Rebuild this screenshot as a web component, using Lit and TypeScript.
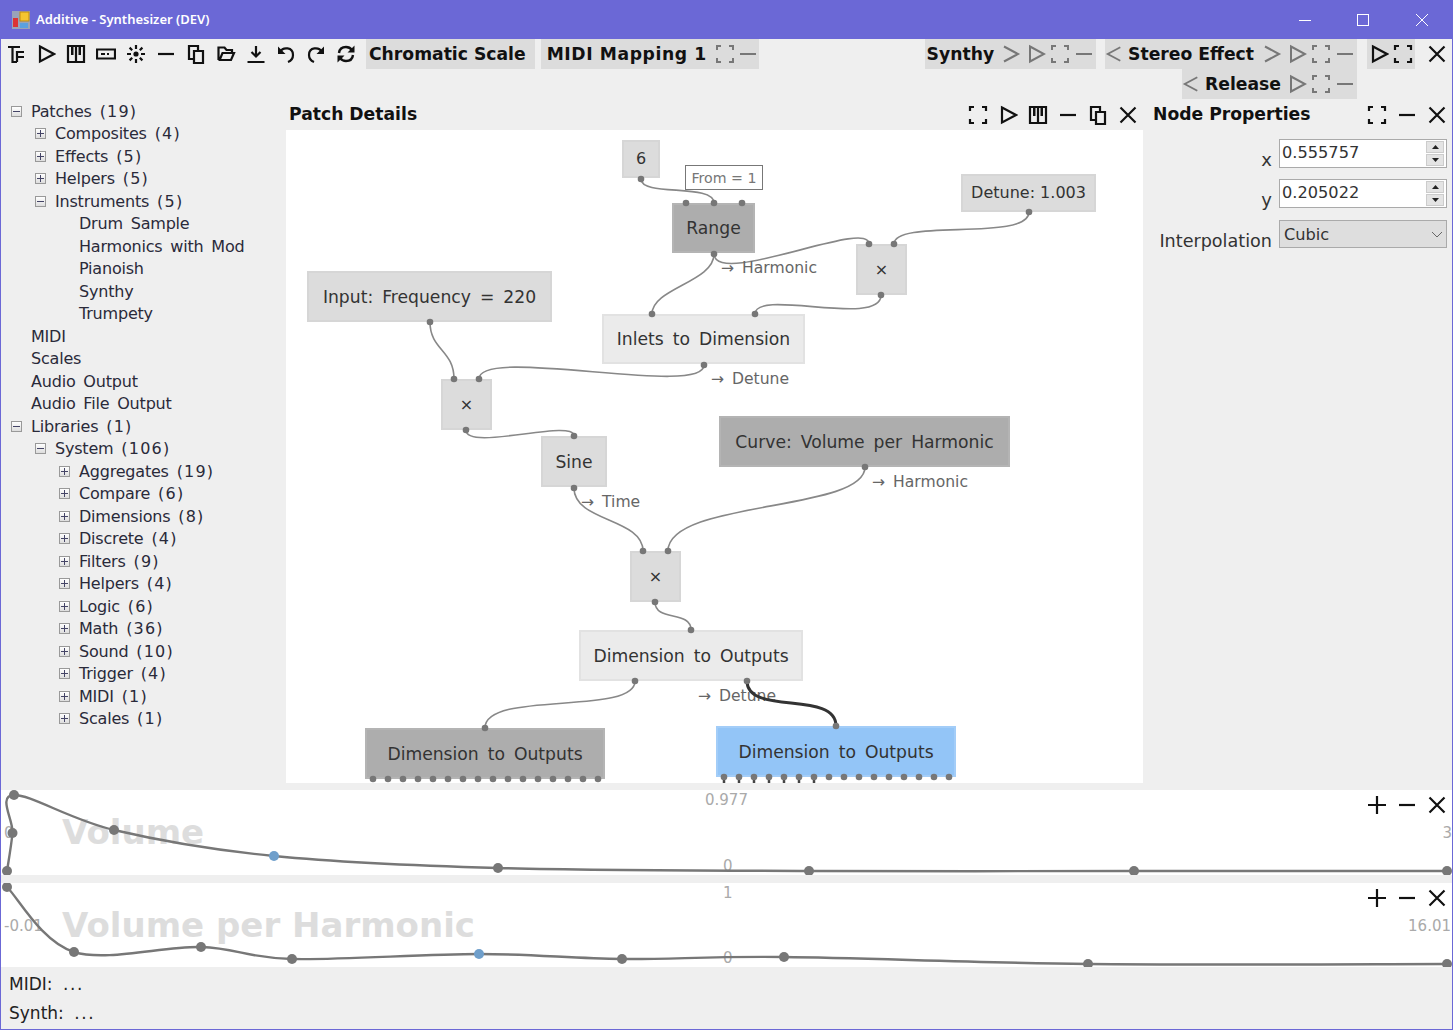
import { LitElement, html, css, svg } from "lit";
import { customElement } from "lit/decorators.js";

const ic: Record<string, any> = {
  tree: svg`<path d="M2 3H14M6.5 3V18H11M11 18V8H18M11 13H18" fill="none"/>`,
  play: svg`<path d="M4 2.5L18 10L4 17.5Z" fill="none"/>`,
  piano: svg`<path d="M2 2H18V18H2ZM10 2V18" fill="none"/><path d="M5 2H7.5V11H5ZM12.5 2H15V11H12.5Z" fill="currentColor" stroke="none"/>`,
  box: svg`<path d="M1 5.5H19V14.5H1Z" fill="none"/><path d="M5 9H9V11H5ZM11 9H13V11H11Z" fill="currentColor" stroke="none"/>`,
  spark: svg`<path d="M10 1V5M10 15V19M1 10H5M15 10H19M3.6 3.6L6.2 6.2M13.8 13.8L16.4 16.4M16.4 3.6L13.8 6.2M6.2 13.8L3.6 16.4" stroke-width="2.2" fill="none"/><circle cx="10" cy="10" r="2.6" fill="currentColor" stroke="none"/>`,
  minus: svg`<path d="M2 10H18" fill="none"/>`,
  copy: svg`<path d="M3 2H12V15H3Z" fill="none"/><path d="M8 7H17V19H8Z" fill="#efefef"/>`,
  open: svg`<path d="M2.5 16V3.5H8.5L10.5 6H16V9M2.5 16H15L18 9H6.5L4 15" fill="none"/>`,
  save: svg`<path d="M10 2V12M5.5 8L10 12.5L14.5 8M1.5 18H18.5" fill="none"/>`,
  undo: svg`<path d="M4 8C7 2.5 17 3 17 11C17 15 14.5 17 12 18" fill="none"/><path d="M2 2.5V10H9.5Z" fill="currentColor" stroke="none"/>`,
  redo: svg`<path d="M16 8C13 2.5 3 3 3 11C3 15 5.5 17 8 18" fill="none"/><path d="M18 2.5V10H10.5Z" fill="currentColor" stroke="none"/>`,
  sync: svg`<path d="M3 9C3.5 5 6.5 3 10 3C12.5 3 14.5 4 16 6M17 11C16.5 15 13.5 17 10 17C7.5 17 5.5 16 4 14" stroke-width="2.4" fill="none"/><path d="M18.5 1.5V8.5H11.5ZM1.5 18.5V11.5H8.5Z" fill="currentColor" stroke="none"/>`,
  expand: svg`<path d="M2 6V2H6M14 2H18V6M2 14V18H6M14 18H18V14" fill="none"/>`,
  close: svg`<path d="M2.5 2.5L17.5 17.5M17.5 2.5L2.5 17.5" fill="none"/>`,
  plus: svg`<path d="M10 1V19M1 10H19" fill="none"/>`,
  next: svg`<path d="M3 2.5L17 10L3 17.5" fill="none"/>`,
  prev: svg`<path d="M17 2.5L3 10L17 17.5" fill="none"/>`,
};

function icon(name: string, cls = "") {
  return html`<span class="ib ${cls}"><svg width="20" height="20" viewBox="0 0 20 20" stroke="currentColor" stroke-width="2.2">${ic[name]}</svg></span>`;
}

const tree: [number, string, string, string][] = [
  [0, "-", "Patches", "(19)"], [1, "+", "Composites", "(4)"], [1, "+", "Effects", "(5)"], [1, "+", "Helpers", "(5)"],
  [1, "-", "Instruments", "(5)"], [2, "", "Drum Sample", ""], [2, "", "Harmonics with Mod", ""], [2, "", "Pianoish", ""],
  [2, "", "Synthy", ""], [2, "", "Trumpety", ""], [0, "", "MIDI", ""], [0, "", "Scales", ""], [0, "", "Audio Output", ""],
  [0, "", "Audio File Output", ""], [0, "-", "Libraries", "(1)"], [1, "-", "System", "(106)"], [2, "+", "Aggregates", "(19)"],
  [2, "+", "Compare", "(6)"], [2, "+", "Dimensions", "(8)"], [2, "+", "Discrete", "(4)"], [2, "+", "Filters", "(9)"],
  [2, "+", "Helpers", "(4)"], [2, "+", "Logic", "(6)"], [2, "+", "Math", "(36)"], [2, "+", "Sound", "(10)"],
  [2, "+", "Trigger", "(4)"], [2, "+", "MIDI", "(1)"], [2, "+", "Scales", "(1)"],
];

const OX = 286, OY = 130;
const nodes: [string, number, number, number, number, string][] = [
  ["6", 622, 140, 660, 178, "lt sm up"],
  ["Range", 672, 203, 755, 253, "dk"],
  ["Detune: 1.003", 961, 174, 1096, 212, "lt sm up"],
  ["×", 856, 244, 907, 295, "lt sm"],
  ["Input: Frequency = 220", 307, 271, 552, 322, "lt"],
  ["Inlets to Dimension", 602, 314, 805, 364, "pl"],
  ["×", 441, 379, 492, 430, "lt sm"],
  ["Sine", 541, 436, 607, 487, "lt"],
  ["Curve: Volume per Harmonic", 719, 416, 1010, 467, "dk"],
  ["×", 630, 551, 681, 602, "lt sm"],
  ["Dimension to Outputs", 579, 630, 803, 681, "pl"],
  ["Dimension to Outputs", 365, 728, 605, 779, "dk"],
  ["Dimension to Outputs", 716, 726, 956, 777, "bl"],
];
const wires = [
  "M641 179C641 197 714 183 714 203",
  "M1029 212C1029 242 894 218 894 244",
  "M714 254C716 288 869 218 869 244",
  "M714 254C714 282 652 288 652 314",
  "M881 295C881 328 755 288 755 314",
  "M430 322C430 350 454 350 454 379",
  "M704 365C704 398 479 345 479 379",
  "M466 430C466 452 574 418 574 436",
  "M574 488C574 522 643 518 643 551",
  "M865 467C865 512 668 500 668 551",
  "M655 602C655 622 691 610 691 630",
  "M635 681C635 716 485 690 485 728",
];
const dots: [number, number][] = [
  [641, 179], [686, 203], [714, 203], [742, 203], [714, 254], [869, 244], [894, 244], [881, 295], [1029, 212],
  [652, 314], [755, 314], [704, 365], [430, 322], [454, 379], [479, 379], [466, 430], [574, 436], [574, 488],
  [865, 467], [643, 551], [668, 551], [655, 602], [691, 630], [635, 681], [747, 681], [485, 728], [836, 726],
];
for (let i = 0; i < 16; i++) { dots.push([373 + i * 15, 779]); dots.push([724 + i * 15, 777]); }
const stubs = [0, 1, 2, 3, 4, 5, 6].map((i) => 724 + i * 15);
const labels: [string, number, number][] = [
  ["→ Harmonic", 721, 268], ["→ Detune", 711, 379], ["→ Time", 581, 502], ["→ Harmonic", 872, 482], ["→ Detune", 698, 696],
];

function spline(p: number[][]) {
  let d = `M${p[0][0]} ${p[0][1]}`;
  for (let i = 0; i < p.length - 1; i++) {
    const a = p[Math.max(i - 1, 0)], b = p[i], c = p[i + 1], e = p[Math.min(i + 2, p.length - 1)];
    const t = 1 / 6;
    d += `C${b[0] + (c[0] - a[0]) * t} ${b[1] + (c[1] - a[1]) * t} ${c[0] - (e[0] - b[0]) * t} ${c[1] - (e[1] - b[1]) * t} ${c[0]} ${c[1]}`;
  }
  return d;
}

function curve(pts: number[][], blue: number) {
  return svg`<path d=${spline(pts)} fill="none" stroke="#777" stroke-width="2.4"/>
    ${pts.map((p, i) => svg`<circle cx=${p[0]} cy=${p[1]} r="5" fill=${i === blue ? "#6f9fcb" : "#777"}/>`)}`;
}

@customElement("app-root")
export class AppRoot extends LitElement {
  static styles = css`
    :host { display: block; width: 1453px; height: 1030px; overflow: hidden; font-family: "DejaVu Sans", sans-serif; color: #222; }
    .win { box-sizing: border-box; width: 1453px; height: 1030px; display: flex; flex-direction: column; background: #efefef; border: 1px solid #6b68d6; border-top: none; }
    .title { height: 39px; flex: none; margin: 0 -1px; background: #6b68d6; color: #fff; display: flex; align-items: center; padding-left: 12px; font: 600 13px "Noto Sans", sans-serif; }
    .ttext { padding-bottom: 2px; }
    .logo { width: 18px; height: 18px; margin-right: 6px; flex: none; }
    .wc { margin-left: auto; display: flex; padding-right: 2px; }
    .wc span { width: 58.5px; height: 39px; display: flex; align-items: center; justify-content: center; }
    .toolbar { height: 60px; flex: none; display: flex; flex-direction: column; }
    .row { height: 30px; display: flex; align-items: center; }
    .row2 { justify-content: flex-end; padding-right: 95px; }
    .tools { display: flex; }
    .ib { width: 30px; height: 30px; display: flex; align-items: center; justify-content: center; flex: none; color: #111; }
    .sec { height: 30px; display: flex; align-items: center; background: #dcdcdc; flex: none; }
    .bold { font-weight: 700; font-size: 17.2px; color: #111; white-space: nowrap; }
    .wide { letter-spacing: 0.6px; }
    .ib.g { color: #777; }
    .ib.n { width: 24px; }
    .ib.nx { width: 26px; }
    .ib.pv { width: 18px; }
    .ib.g svg { stroke-width: 2; }
    .chrom { margin-left: 5px; padding: 0 9px 0 3px; }
    .midi { margin-left: 6px; padding-left: 6px; }
    .midi .wide { margin-right: 6px; }
    .midi .ib:last-child { width: 22px; }
    .synthy { padding-left: 2px; }
    .synthy .bold { margin-right: 4px; }
    .stereo { margin-left: 9px; }
    .runs { margin-left: 10px; }
    .stereo .bold { margin: 0 5px; }
    .rel .bold { margin: 0 4px 0 5px; }
    .closer { width: 37px; display: flex; justify-content: flex-end; }
    .grow { flex: 1; }
    .main { flex: none; display: flex; height: 684px; }
    .treep { width: 285px; flex: none; padding-top: 1px; box-sizing: border-box; }
    .tr { height: 22.5px; display: flex; align-items: center; font-size: 16px; letter-spacing: -0.2px; word-spacing: 3px; white-space: pre; color: #2a2a3a; position: relative; }
    .tr b { font-weight: 400; letter-spacing: 1.2px; }
    .exp { position: absolute; width: 9px; height: 9px; border: 1px solid #999; background: linear-gradient(#fff, #ddd); display: flex; align-items: center; justify-content: center; }
    .exp svg { display: block; }
    .center { width: 857px; flex: none; display: flex; flex-direction: column; }
    .hd { height: 31px; flex: none; display: flex; align-items: center; }
    .hd .name { padding: 0 0 2px 3px; flex: 1; }
    .canvas { position: relative; flex: 1; background: #fff; overflow: hidden; }
    .canvas svg.w { position: absolute; left: 0; top: 0; }
    .node { position: absolute; box-sizing: border-box; display: flex; align-items: center; justify-content: center; border: 2px solid #d6d6d6; font-size: 17.2px; word-spacing: 3.5px; color: #333; white-space: nowrap; }
    .node.sm { font-size: 16px; word-spacing: 0; }
    .node.up { padding-bottom: 2px; }
    .lt { background: #dcdcdc; }
    .dk { background: #adadad; border-color: #b4b4b4; }
    .pl { background: #ebebeb; border-color: #e2e2e2; }
    .bl { background: #93c5f7; border-color: #a3cdf8; }
    .from { position: absolute; left: 399px; top: 35px; width: 78px; height: 25px; box-sizing: border-box; border: 1px solid #777; background: #fff; font-size: 14.2px; color: #777; display: flex; align-items: center; justify-content: center; white-space: nowrap; }
    .lab { position: absolute; font-size: 15.6px; word-spacing: 3px; color: #666; line-height: 18px; white-space: nowrap; transform: translateY(-9px); }
    .right { flex: 1; display: flex; flex-direction: column; padding-left: 10px; }
    .right .hd .name { padding-left: 0; }
    .props { display: grid; grid-template-columns: 119px 168px; column-gap: 7px; row-gap: 11px; padding-top: 9px; align-items: end; }
    .lbl { text-align: right; font-size: 17.6px; color: #333; line-height: 20px; margin-bottom: -3px; }
    .lbl.xy { font-size: 18px; line-height: 22px; }
    .inp { height: 29px; box-sizing: border-box; border: 1px solid #aaa; background: #fff; font-size: 16.2px; color: #333; display: flex; padding: 3px 0 0 2px; }
    .inp span.v { flex: 1; line-height: 20px; }
    .spin { width: 18px; margin: -2px 2px 1px 0; display: flex; flex-direction: column; gap: 1px; }
    .spin i { flex: 1; background: #e4e4e4; border: 1px solid #ccc; display: flex; align-items: center; justify-content: center; }
    .sel { height: 28px; box-sizing: border-box; border: 1px solid #aaa; background: #dedede; font-size: 16.2px; color: #333; display: flex; align-items: center; justify-content: space-between; padding: 0 3px 0 4px; margin-top: 1px; }
    .gap7 { height: 7px; flex: none; }
    .graphs { flex: none; display: grid; grid-template-rows: 85px 84px; row-gap: 8px; }
    .graph { position: relative; background: #fff; overflow: hidden; }
    .graph svg.c { position: absolute; left: 0; top: 0; }
    .gt { position: absolute; left: 61px; top: 22px; font-size: 34px; font-weight: 700; line-height: 40px; color: #ddd; white-space: nowrap; }
    .gv { position: absolute; margin-top: 1px; font-size: 15px; color: #aaa; line-height: 16px; white-space: nowrap; }
    .gbtn { position: absolute; right: 0; display: flex; top: 0; }
    .status { flex: 1; padding: 5px 0 0 8px; font-size: 17px; word-spacing: 5px; color: #222; }
    .status div { height: 29px; line-height: 24px; }
    .status span { letter-spacing: 1.6px; }
  `;

  render() {
    const W = 1451;
    const g1 = [[6, 81], [11.5, 43], [13, 5], [113, 40], [273, 66], [497, 78], [808, 81], [1133, 81], [1446, 81]];
    const g2 = [[6, 4], [73, 69], [200, 64], [291, 76], [478, 71], [621, 76], [783, 74], [1087, 81], [1446, 81]];
    const spin = html`<div class="spin"><i><svg width="7" height="4"><path d="M3.5 0L7 4H0Z" fill="#222"/></svg></i><i><svg width="7" height="4"><path d="M3.5 4L7 0H0Z" fill="#222"/></svg></i></div>`;
    return html`<div class="win">
      <div class="title">
        <svg class="logo" viewBox="0 0 18 18"><rect width="18" height="18" fill="#9aa3b8"/><rect x="8" y="1" width="9" height="9" fill="#f4c430" stroke="#c08a10"/><rect x="1" y="7" width="5" height="9" fill="#d33"/><rect x="8" y="12" width="8" height="5" fill="#5aa0e0"/></svg>
        <span class="ttext">Additive - Synthesizer (DEV)</span>
        <div class="wc">
          <span><svg width="12" height="12" stroke="#fff"><path d="M0 6.5H12"/></svg></span>
          <span><svg width="12" height="12" stroke="#fff" fill="none"><rect x=".5" y=".5" width="11" height="11"/></svg></span>
          <span><svg width="12" height="12" stroke="#fff"><path d="M0 0L12 12M12 0L0 12"/></svg></span>
        </div>
      </div>
      <div class="toolbar">
        <div class="row">
          <div class="tools">${["tree", "play", "piano", "box", "spark", "minus", "copy", "open", "save", "undo", "redo", "sync"].map((n) => icon(n))}</div>
          <div class="sec bold chrom">Chromatic Scale</div>
          <div class="sec midi"><span class="bold wide">MIDI Mapping 1</span>${icon("expand", "g n")}${icon("minus", "g n")}</div>
          <div class="grow"></div>
          <div class="sec synthy"><span class="bold">Synthy</span>${icon("next", "g nx")}${icon("play", "g n")}${icon("expand", "g n")}${icon("minus", "g n")}</div>
          <div class="sec stereo">${icon("prev", "g pv")}<span class="bold">Stereo Effect</span>${icon("next", "g nx")}${icon("play", "g n")}${icon("expand", "g n")}${icon("minus", "g n")}</div>
          <div class="sec runs">${icon("play", "n")}${icon("expand", "n")}</div>
          <div class="closer">${icon("close")}</div>
        </div>
        <div class="row row2">
          <div class="sec rel">${icon("prev", "g pv")}<span class="bold">Release</span>${icon("play", "g n")}${icon("expand", "g n")}${icon("minus", "g n")}</div>
        </div>
      </div>
      <div class="main">
        <div class="treep">
          ${tree.map(([lv, ex, t, c]) => html`<div class="tr" style="padding-left:${30 + lv * 24}px">
            ${ex ? html`<span class="exp" style="left:${10 + lv * 24}px"><svg width="7" height="7" stroke="#446"><path d="M0 3.5H7"/>${ex === "+" ? svg`<path d="M3.5 0V7"/>` : ""}</svg></span>` : ""}<span>${t}${c ? " " : ""}<b>${c}</b></span></div>`)}
        </div>
        <div class="center">
          <div class="hd">
            <span class="bold name">Patch Details</span>
            ${["expand", "play", "piano", "minus", "copy", "close"].map((n) => icon(n))}
          </div>
          <div class="canvas">
            <svg class="w" width="857" height="653" viewBox="${OX} ${OY} 857 653">
              ${wires.map((d) => svg`<path d=${d} fill="none" stroke="#888" stroke-width="1.6"/>`)}
            </svg>
            ${nodes.map(([t, x1, y1, x2, y2, c]) => html`<div class="node ${c}" style="left:${x1 - OX}px;top:${y1 - OY}px;width:${x2 - x1}px;height:${y2 - y1}px">${t}</div>`)}
            <div class="from">From = 1</div>
            ${labels.map(([t, x, y]) => html`<div class="lab" style="left:${x - OX}px;top:${y - OY}px">${t}</div>`)}
            <svg class="w" width="857" height="653" viewBox="${OX} ${OY} 857 653">
              <path d="M747 681C747 716 836 690 836 726" fill="none" stroke="#333" stroke-width="3"/>
              ${stubs.map((x) => svg`<path d="M${x} 777V783" stroke="#444" stroke-width="2.5"/>`)}
              ${dots.map(([x, y]) => svg`<circle cx=${x} cy=${y} r="3.3" fill="#777"/>`)}
            </svg>
          </div>
        </div>
        <div class="right">
          <div class="hd">
            <span class="bold name">Node Properties</span>
            ${["expand", "minus", "close"].map((n) => icon(n))}
          </div>
          <div class="props">
            <div class="lbl xy">x</div>
            <div class="inp"><span class="v">0.555757</span>${spin}</div>
            <div class="lbl xy">y</div>
            <div class="inp"><span class="v">0.205022</span>${spin}</div>
            <div class="lbl">Interpolation</div>
            <div class="sel">Cubic<svg width="12" height="7" fill="none" stroke="#666"><path d="M1 1L6 6L11 1"/></svg></div>
          </div>
        </div>
      </div>
      <div class="gap7"></div>
      <div class="graphs">
        <div class="graph">
          <div class="gt">Volume</div>
          <div class="gv" style="left:3px;top:34px">0</div>
          <div class="gv" style="left:704px;top:1px">0.977</div>
          <div class="gv" style="left:722px;top:67px">0</div>
          <div class="gv" style="right:0;top:34px">3</div>
          <svg class="c" width=${W} height="85">${curve(g1, 4)}</svg>
          <div class="gbtn">${icon("plus")}${icon("minus")}${icon("close")}</div>
        </div>
        <div class="graph">
          <div class="gt">Volume per Harmonic</div>
          <div class="gv" style="left:3px;top:34px">-0.01</div>
          <div class="gv" style="left:722px;top:1px">1</div>
          <div class="gv" style="left:722px;top:66px">0</div>
          <div class="gv" style="right:1px;top:34px">16.01</div>
          <svg class="c" width=${W} height="84">${curve(g2, 4)}</svg>
          <div class="gbtn">${icon("plus")}${icon("minus")}${icon("close")}</div>
        </div>
      </div>
      <div class="status"><div>MIDI: <span>...</span></div><div>Synth: <span>...</span></div></div>
    </div>`;
  }
}
